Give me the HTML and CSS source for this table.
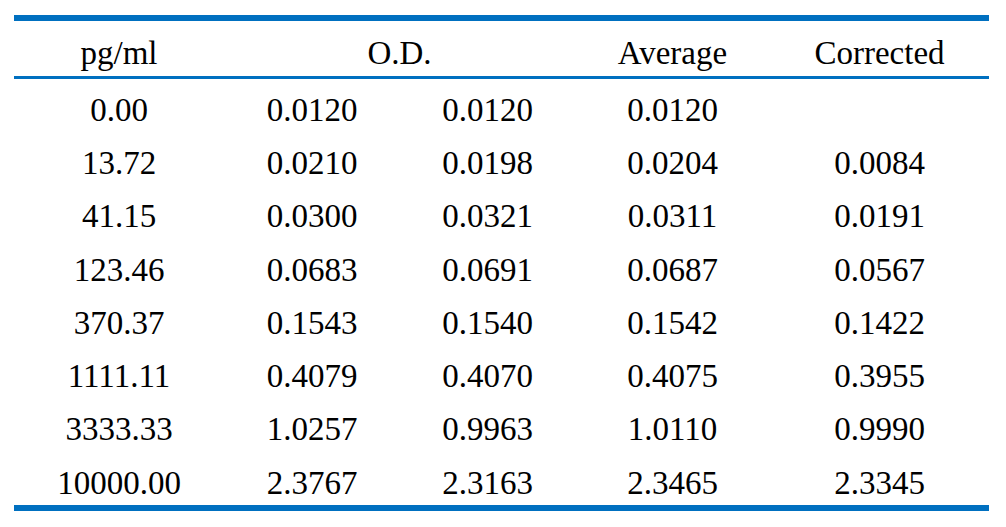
FILE: index.html
```html
<!DOCTYPE html>
<html>
<head>
<meta charset="utf-8">
<link rel="stylesheet" href="styles.css">
</head>
<body>
<div class="tbl">
  <div class="row head">
    <div class="cell">pg/ml</div>
    <div class="cell span2">O.D.</div>
    <div class="cell">Average</div>
    <div class="cell">Corrected</div>
  </div>
  <div class="body">
    <div class="row"><div class="cell">0.00</div><div class="cell">0.0120</div><div class="cell">0.0120</div><div class="cell">0.0120</div><div class="cell"></div></div>
    <div class="row"><div class="cell">13.72</div><div class="cell">0.0210</div><div class="cell">0.0198</div><div class="cell">0.0204</div><div class="cell">0.0084</div></div>
    <div class="row"><div class="cell">41.15</div><div class="cell">0.0300</div><div class="cell">0.0321</div><div class="cell">0.0311</div><div class="cell">0.0191</div></div>
    <div class="row"><div class="cell">123.46</div><div class="cell">0.0683</div><div class="cell">0.0691</div><div class="cell">0.0687</div><div class="cell">0.0567</div></div>
    <div class="row"><div class="cell">370.37</div><div class="cell">0.1543</div><div class="cell">0.1540</div><div class="cell">0.1542</div><div class="cell">0.1422</div></div>
    <div class="row"><div class="cell">1111.11</div><div class="cell">0.4079</div><div class="cell">0.4070</div><div class="cell">0.4075</div><div class="cell">0.3955</div></div>
    <div class="row"><div class="cell">3333.33</div><div class="cell">1.0257</div><div class="cell">0.9963</div><div class="cell">1.0110</div><div class="cell">0.9990</div></div>
    <div class="row"><div class="cell">10000.00</div><div class="cell">2.3767</div><div class="cell">2.3163</div><div class="cell">2.3465</div><div class="cell">2.3345</div></div>
  </div>
</div>
</body>
</html>
```
FILE: styles.css
```css
html, body {
  margin: 0;
  padding: 0;
  background: #ffffff;
}
body {
  font-family: "Liberation Serif", "Times New Roman", serif;
  font-size: 33px;
  color: #000000;
}
.tbl {
  margin: 15px 0 0 14px;
  width: 975px;
  border-top: 6px solid #0070c0;
  border-bottom: 6px solid #0070c0;
}
.row {
  display: grid;
  grid-template-columns: 210px 176px 175px 195px 219px;
  box-sizing: border-box;
  height: 53.25px;
  padding-top: 14.85px;
  line-height: 33px;
}
.row.head {
  height: 58px;
  padding-top: 16.35px;
  border-bottom: 3px solid #0070c0;
}
.cell {
  text-align: center;
  white-space: nowrap;
}
.span2 {
  grid-column: span 2;
}
```
